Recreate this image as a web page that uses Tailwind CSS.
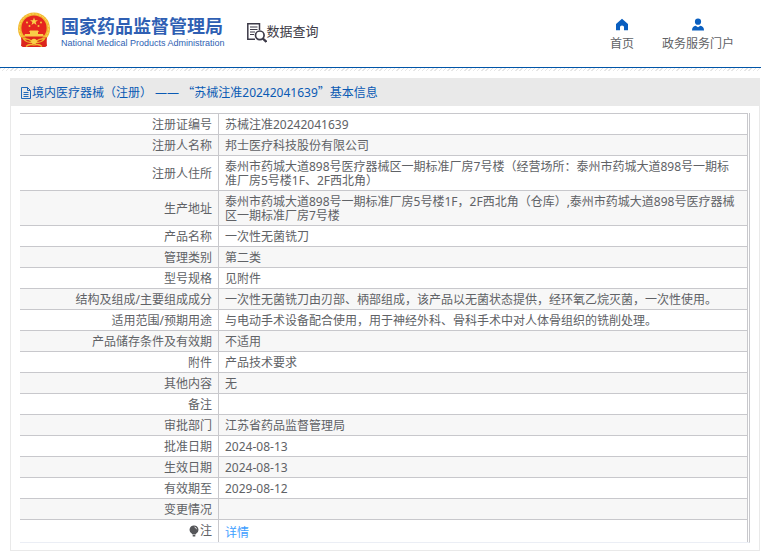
<!DOCTYPE html>
<html lang="zh-CN">
<head>
<meta charset="utf-8">
<meta name="viewport" content="width=device-width, initial-scale=1">
<title>国家药品监督管理局 数据查询</title>
<script src="https://cdn.jsdelivr.net/npm/@tailwindcss/browser@4"></script>
</head>
<body class="bg-white font-['Noto_Sans','Noto_Sans_CJK_SC',sans-serif] text-xs text-[#606266]">
<header>
  <div class="flex h-[68px] items-start border-b border-[#0055a8] pr-[27px] pl-[17px]">
    <a href="#" class="flex items-start gap-2.5 pt-3 text-[#2f5fb3]">
      <svg class="h-9 w-[34px]" viewBox="0 0 34 36" aria-hidden="true">
        <path d="M5 24 L4 34 Q8 36 12 34 L17 33 L22 34 Q26 36 30 34 L29 24Z" fill="#d9241c"/>
        <circle cx="17" cy="16.500" r="16" fill="#f3b92f"/>
        <circle cx="17" cy="16.500" r="14.600" fill="none" stroke="#fbd766" stroke-width="1" stroke-dasharray="2 1.500"/>
        <circle cx="17" cy="16" r="12.600" fill="#e5261f"/>
        <path d="M17 5.500l1 2.800h3l-2.400 1.800.9 2.900-2.500-1.800-2.500 1.800.9-2.900L13 8.300h3z" fill="#f9d14a"/>
        <g fill="#f7c93f"><circle cx="10" cy="10.500" r="1"/><circle cx="24" cy="10.500" r="1"/><circle cx="12.500" cy="14" r="1"/><circle cx="21.500" cy="14" r="1"/></g>
        <path d="M13 18.500h8l1 1.500h-1v2h5l1 2.500H7L8 22h5v-2h-1z" fill="#f8cf48"/>
        <path d="M4 25.500L30 25.500 28.500 35 5.500 35z" fill="#dc241c"/>
        <path d="M5 25.500q6 .5 9 2.500h6q3-2 9-2.500-2 4.500-8 5.500h-8q-6-1-8-5.500z" fill="#efb32d"/>
        <path d="M8 27.500q4 0 6 2-3 1-6-2zM26 27.500q-4 0-6 2 3 1 6-2z" fill="#d9241c"/>
        <circle cx="17" cy="29.500" r="2.800" fill="#f8cf48"/>
        <path d="M9 34.500q3-3 8-1.500 5-1.500 8 1.500" fill="none" stroke="#f3b92f" stroke-width="1.300"/>
      </svg>
      <span class="flex flex-col pt-1">
        <span class="text-[18px] leading-[20px] font-bold">国家药品监督管理局</span>
        <span class="font-['Liberation_Sans',Arial,sans-serif] text-[9px] leading-[14px]">National Medical Products Administration</span>
      </span>
    </a>
    <a href="#" class="ml-[22px] flex items-start pt-5 text-[#3c3a45]">
      <svg class="mt-[3px] h-5 w-5" viewBox="0 0 20 20" fill="none" stroke="#3c3a48" aria-hidden="true">
        <path d="M12.500 7V.8H.8v15.400H8" stroke-width="1.500"/>
        <path d="M3 4h7.500M3 6.500h7.500M3 9h5M3 11.500h4" stroke-width="1.200"/>
        <circle cx="12.800" cy="12.300" r="4.300" stroke-width="1.700"/>
        <path d="M15.800 15.500l3.600 3.400" stroke-width="2.400"/>
      </svg>
      <span class="text-[13px] leading-[22px]">数据查询</span>
    </a>
    <nav class="ml-auto flex gap-7 pt-[18px]">
      <a href="#" class="flex flex-col items-center gap-1">
        <svg class="h-3.5 w-3.5" viewBox="0 0 14 14" fill="#0a5fc0" aria-hidden="true"><path d="M7 .8L13 6v6.200H9V9Q9 7.500 7 7.500T5 9v3.200H1V6z"/></svg>
        <span class="leading-4">首页</span>
      </a>
      <a href="#" class="flex flex-col items-center gap-1">
        <svg class="h-3.5 w-3.5" viewBox="0 0 14 14" fill="#0a5fc0" aria-hidden="true"><circle cx="7" cy="3.700" r="3.100"/><path d="M1 12.400Q1 8.300 4.700 7.700L7 9.200l2.300-1.500Q13 8.300 13 12.400z"/></svg>
        <span class="leading-4">政务服务门户</span>
      </a>
    </nav>
  </div>
  <div class="h-[3px] bg-[repeating-linear-gradient(135deg,#e6e6e6_0px,#e6e6e6_1px,#ffffff_1px,#ffffff_3px)]"></div>
</header>
<main class="mt-[7px] mr-px ml-2.5 border border-t-0 border-[#e9e9e9]">
  <h1 class="flex h-7 items-center bg-[#e9e9e9] pt-px pl-2.5 text-[#0a5ab4]">
    <svg class="mr-px h-3 w-2.5" viewBox="0 0 10 12" fill="none" stroke="#0a5ab4" aria-hidden="true"><path d="M.5 .5h6l3 3v8h-9zM6.500 .5v3h3M2.500 5.500h5M2.500 7.500h5M2.500 9.500h5" stroke-width=".9"/></svg>
    <span>境内医疗器械（注册） —— <span class="font-['Noto_Sans_CJK_SC',sans-serif]">“</span>苏械注准20242041639<span class="font-['Noto_Sans_CJK_SC',sans-serif]">”</span>基本信息</span>
  </h1>
  <div class="mt-[7px] mr-[9px] mb-[7px] ml-[9px] border-r border-b border-[#ebeef5] border-r-[#c8c8cc] pr-px">
    <table class="w-full table-fixed border-separate border-spacing-0 border-r border-[#c8c8cc] text-left leading-[14px] [&_td]:border-t [&_td]:border-[#c8c8cc] [&_td]:px-1.5 [&_td]:pt-1 [&_td]:pb-0.5 [&_th]:border-t [&_th]:border-r [&_th]:border-[#c8c8cc] [&_th]:px-1.5 [&_th]:pt-1 [&_th]:pb-0.5 [&_th]:text-right [&_th]:font-normal [&_tr:nth-child(even)]:bg-[#f7f7f7]">
      <colgroup><col class="w-[199px]"><col></colgroup>
      <tbody>
        <tr><th scope="row">注册证编号</th><td>苏械注准20242041639</td></tr>
        <tr><th scope="row">注册人名称</th><td>邦士医疗科技股份有限公司</td></tr>
        <tr><th scope="row">注册人住所</th><td>泰州市药城大道898号医疗器械区一期标准厂房7号楼（经营场所：泰州市药城大道898号一期标准厂房5号楼1F、2F西北角）</td></tr>
        <tr><th scope="row">生产地址</th><td>泰州市药城大道898号一期标准厂房5号楼1F，2F西北角（仓库）,泰州市药城大道898号医疗器械区一期标准厂房7号楼</td></tr>
        <tr><th scope="row">产品名称</th><td>一次性无菌铣刀</td></tr>
        <tr><th scope="row">管理类别</th><td>第二类</td></tr>
        <tr><th scope="row">型号规格</th><td>见附件</td></tr>
        <tr><th scope="row">结构及组成/主要组成成分</th><td>一次性无菌铣刀由刃部、柄部组成，该产品以无菌状态提供，经环氧乙烷灭菌，一次性使用。</td></tr>
        <tr><th scope="row">适用范围/预期用途</th><td>与电动手术设备配合使用，用于神经外科、骨科手术中对人体骨组织的铣削处理。</td></tr>
        <tr><th scope="row">产品储存条件及有效期</th><td>不适用</td></tr>
        <tr><th scope="row">附件</th><td>产品技术要求</td></tr>
        <tr><th scope="row">其他内容</th><td>无</td></tr>
        <tr><th scope="row">备注</th><td></td></tr>
        <tr><th scope="row">审批部门</th><td>江苏省药品监督管理局</td></tr>
        <tr><th scope="row">批准日期</th><td>2024-08-13</td></tr>
        <tr><th scope="row">生效日期</th><td>2024-08-13</td></tr>
        <tr><th scope="row">有效期至</th><td>2029-08-12</td></tr>
        <tr><th scope="row">变更情况</th><td></td></tr>
        <tr class="h-[23px]"><th scope="row"><span class="inline-flex items-center gap-px"><svg class="h-3 w-2.5" viewBox="0 0 10 12" aria-hidden="true"><path d="M5 .5a4.300 4.300 0 0 1 2.300 8L6.500 9.500h-3L2.700 8.500A4.300 4.300 0 0 1 5 .5zM3.700 10h2.600v1.500H3.700z" fill="#555659"/><path d="M5.500 2q1.800.3 2 2.200" fill="none" stroke="#fff" stroke-width=".8"/></svg>注</span></th><td class="align-bottom"><a href="#" class="text-[#409eff]">详情</a></td></tr>
      </tbody>
    </table>
  </div>
</main>
</body>
</html>
